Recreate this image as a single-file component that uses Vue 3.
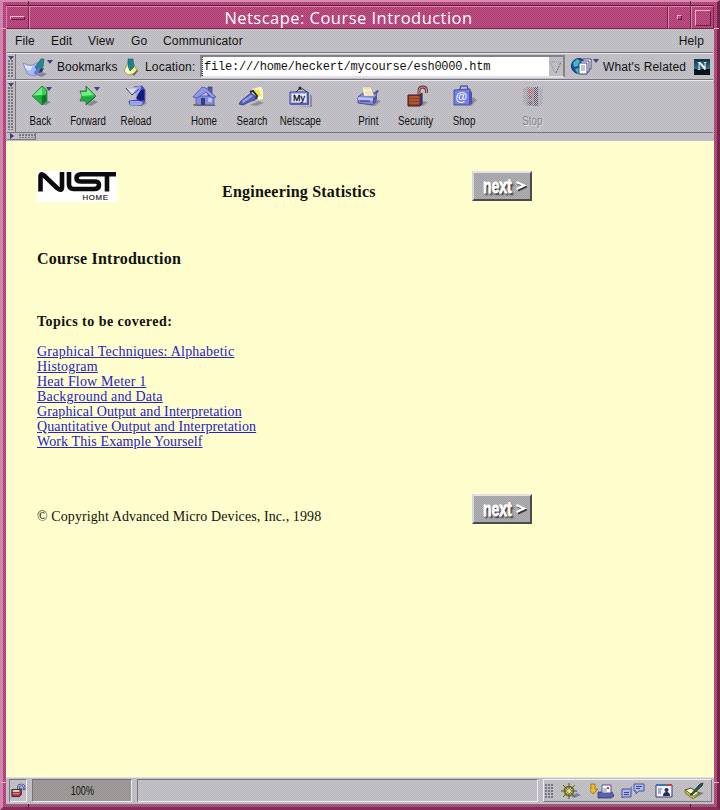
<script setup>
const menus = [
  { label: 'File', w: 36 },
  { label: 'Edit', w: 37 },
  { label: 'View', w: 43 },
  { label: 'Go', w: 32 },
  { label: 'Communicator', w: 90 },
]

const caret = '<path d="M30 4h6l-3 4z" fill="#404080"/>'

const art = {
  back: `<path d="M25 22l3-5 7 2-5 3z" fill="#8a8890"/><path d="M16 13L26 3l5 4v11l-5 4z" fill="#22b040" stroke="#1a5c30" stroke-width=".6"/><path d="M17 12.500L26 4v8z" fill="#6ff083"/><path d="M26 4l4 3v4l-4 1z" fill="#3fcf58"/><path d="M17 14l9-1v8z" fill="#1fae42"/><path d="M26 13l4.500-1v6L26 21z" fill="#087a28"/>${caret}`,
  forward: `<path d="M23 22l7-5 4 2-7 4z" fill="#8a8890"/><path d="M16 8h6V3l10 10-10 9v-4h-6l2-5z" fill="#2cba48" stroke="#1a5c30" stroke-width=".7"/><path d="M17 9h6V5l7 7-12 1z" fill="#6ff083"/><path d="M18 14h12l-7 6v-3h-6z" fill="#1caa40"/><path d="M23 21l8-7" stroke="#075e20"/>${caret}`,
  reload: `<path d="M24 22l7-4 4 2-5 3z" fill="#8a8890"/><path d="M22 4l8-1 3 4v11l-3 4H18l-1-4 8-1 2-3z" fill="#4a55bd" stroke="#2a327c" stroke-width=".7"/><path d="M22 4l7-1-1 6-4 5z" fill="#9aa5ee"/><path d="M28 8l3-2 1 2v9l-4 1-4-3z" fill="#101a80"/><path d="M18 18h9l4 1-1 3H18z" fill="#98a3f2"/><path d="M14 5l4 1 7-1-6 7z" fill="#d9dced"/><path d="M14 5l6 7 7-6" fill="none" stroke="#39406e"/>`,
  home: `<path d="M13 21l7 1 13-1 3 2H14z" fill="#368577"/><path d="M28 4h4v9h-4z" fill="#5359a4" stroke="#34396d" stroke-width=".7"/><path d="M16 13h18v9H16z" fill="#858ce0" stroke="#464c96" stroke-width=".7"/><path d="M13 14L22 4l4 1 10 9-4 1-6-6-9 6z" fill="#8f98ec" stroke="#4b519f" stroke-width=".8"/><path d="M21 15h4v7h-4z" fill="#353b85"/><path d="M28 15h4v4h-4z" fill="#b8c1ff"/><path d="M14 22h4m7 0h5" stroke="#bb5b36"/>`,
  search: `<path d="M22 22l9-4 5 2-8 3z" fill="#8f8d97"/><path d="M24 6l9-2 2 3v9l-4 1-7-7z" fill="#fff9c2"/><path d="M26 6l5 1 3 5-5 3-4-6z" fill="#f2e936"/><path d="M13 18l10-8 5 4-1 3-4 1-8 4-4-1z" fill="#5a62b8" stroke="#2d347a" stroke-width=".8"/><path d="M14 18l9-6 2 1-10 7z" fill="#98a2ea"/><path d="M22 9l3-1 4 5-1 3" fill="none" stroke="#20266a" stroke-width="2"/><path d="M30 4l1 2m2-2l-1 3m3 3h-3" stroke="#fff"/>`,
  netscape: `<path d="M20 23h14V11l2 2v11z" fill="#8f8d97"/><path d="M20 9l3-3h4l4 3" fill="none" stroke="#2c2e40"/><circle cx="24" cy="5" r="1.500" fill="#222"/><path d="M14 9h18v12H14z" fill="#aab4fb" stroke="#353c86"/><path d="M16 11h14v8H16z" fill="#ecedff"/><path d="M14 21h18M32 9v13" stroke="#4b52a8" stroke-width="1.700"/><text x="17" y="18" font-size="9" font-family="Liberation Sans" fill="#111" stroke="#111" stroke-width=".3">My</text>`,
  print: `<path d="M25 22l9-5 3 1-6 5z" fill="#8f8d97"/><path d="M14 14l5-4h13v9l-4 3-14-2z" fill="#7d87d9" stroke="#363e87" stroke-width=".8"/><path d="M18 4h9l3 9H20z" fill="#fff6ce" stroke="#999" stroke-width=".5"/><path d="M20 6h6m-5 3h6m-5 2h6" stroke="#c5bfa1" stroke-width=".7"/><path d="M14 14l15 1 3-5v4l-4 4-14-1z" fill="#b7c1ff"/><path d="M29 15v6l4-5v-5z" fill="#4c559e"/><path d="M30 10l3-3 2 1-3 4z" fill="#4d59a7"/><path d="M16 18h10" stroke="#30366c"/>`,
  security: `<path d="M29 18l7 1-5 4h-3z" fill="#8f8d97"/><path d="M27 12V8q0-4 4-4 3.500 0 3.500 4v2" fill="none" stroke="#5b2c3d" stroke-width="2.800"/><path d="M27 12V8q0-4 4-4 3.500 0 3.500 4v2" fill="none" stroke="#d08f78" stroke-width="1.200"/><path d="M16 12h12l2-2v11l-2 2H16z" fill="#8f3c20" stroke="#391b24"/><path d="M17 14h10m-10 3h10m-10 3h10" stroke="#d2703c"/><path d="M28 12l2-1v10l-2 2z" fill="#35307a"/>`,
  shop: `<path d="M27 22l6-8 4 3-6 6z" fill="#8f8d97"/><path d="M19 9l2-6h6l2 6" fill="none" stroke="#555cae" stroke-width="1.500"/><path d="M14 7l16-1 2 14-3 2H14z" fill="#7480e4" stroke="#343d98" stroke-width=".8"/><path d="M29 8l3 1v11l-3 2z" fill="#4b54ac"/><text x="15.500" y="18" font-size="12" font-weight="bold" font-family="Liberation Sans" fill="#f2f4ff">@</text>`,
  stop: `<path d="M15 6l4-2h12l4 2v4l-2 1 2 1v4l-2 1 2 1v2l-4 3H19l-4-3v-2l2-1-2-1v-4l2-1-2-1z" fill="#a09eae"/><path d="M19 4h7v19h-7z" fill="#8b8592"/><path d="M26 4h4v19h-4z" fill="#5a5766"/><circle cx="22.500" cy="8.500" r="2.800" fill="#d04a5c"/><circle cx="22.500" cy="14" r="2" fill="#8b5056"/><circle cx="22.500" cy="20" r="2" fill="#49545b"/><path d="M14 4.500h21M14 6.500h21M14 8.500h21M14 10.500h21M14 12.500h21M14 14.500h21M14 16.500h21M14 18.500h21M14 20.500h21M14 22.500h21" stroke="#c2c0c6" stroke-dasharray="1 1"/><path d="M15 5.500h20M15 7.500h20M15 9.500h20M15 11.500h20M15 13.500h20M15 15.500h20M15 17.500h20M15 19.500h20M15 21.500h20" stroke="#c2c0c6" stroke-dasharray="1 1"/>`,
}

const tools = [
  [{ id: 'back', label: 'Back' }, { id: 'forward', label: 'Forward' }, { id: 'reload', label: 'Reload' }],
  [{ id: 'home', label: 'Home' }, { id: 'search', label: 'Search' }, { id: 'netscape', label: 'Netscape' }],
  [{ id: 'print', label: 'Print' }, { id: 'security', label: 'Security' }, { id: 'shop', label: 'Shop' }],
  [{ id: 'stop', label: 'Stop', off: true }],
]

const topics = [
  { text: 'Graphical Techniques: Alphabetic', c: 'wide' },
  { text: 'Histogram' },
  { text: 'Heat Flow Meter 1' },
  { text: 'Background and Data' },
  { text: 'Graphical Output and Interpretation', c: 'tight' },
  { text: 'Quantitative Output and Interpretation', c: 'tight' },
  { text: 'Work This Example Yourself', c: 'tight' },
]

const components = [
  `<path d="M12 14l6-3 4 2-7 3z" fill="#777fb8"/><circle cx="10" cy="9" r="4.500" fill="none" stroke="#77751d" stroke-width="2"/><path d="M10 1v16M2 9h16M4 3l12 12M16 3L4 15" stroke="#5f5d19"/><circle cx="10" cy="9" r="2" fill="#e3df7a"/>`,
  `<path d="M1 2h4v5h3l-5 5-4-5h2z" fill="#f5bd18" stroke="#866112" stroke-width=".7"/><path d="M8 10h14l2 4-3 2H8z" fill="#5962ae" stroke="#252d6a" stroke-width=".7"/><path d="M12 3h9v8h-9z" fill="#fff" stroke="#4b528f"/><path d="M17 5h2v2h-2z" fill="#c23b4b"/><path d="M13 7h4m-4 2h4" stroke="#888"/>`,
  `<path d="M13 2h10v7h-5l-3 3V9h-2z" fill="#aeb9fa" stroke="#4b5494"/><path d="M1 7h9v8H2l-1 1z" fill="#aab5f4" stroke="#4b5494"/><path d="M9 6l2-2v8l-1 2" fill="#7680c0"/><path d="M15 4.500h6m-6 2h4M3 10.500h5m-5 2h5" stroke="#414979"/>`,
  `<path d="M4 3h16v12H4z" fill="#f1f1ff" stroke="#333b77"/><path d="M4 3h7" stroke="#426ec7" stroke-width="2"/><path d="M11 3h4" stroke="#248c78" stroke-width="2"/><path d="M15 3h5" stroke="#d73547" stroke-width="2"/><path d="M6 7h4m-4 2h3m-3 2h3" stroke="#656a98"/><circle cx="14.500" cy="8" r="2" fill="#252c59"/><path d="M11 14q0-4 3.500-4t3.500 4z" fill="#252c59"/>`,
  `<path d="M8 15l9-5 4 1-9 5z" fill="#827f69"/><path d="M2 8l6-2 8 5-5 4z" fill="#fffbd0" stroke="#4f5031"/><path d="M2 8v3l8 6 6-5v-2l-5 4z" fill="#bdbe3d" stroke="#4c4b23" stroke-width=".6"/><path d="M7 13L17 2l3-1-1 3L9 13z" fill="#225f4e" stroke="#111c20" stroke-width=".7"/>`,
]
</script>

<template>
  <div class="window">
    <i class="notch tl"></i><i class="notch tr"></i><i class="notch bl"></i><i class="notch br"></i>
    <i class="notch lt"></i><i class="notch rt"></i><i class="notch lb"></i><i class="notch rb"></i>
    <header class="titlebar">
      <div class="tbtn sys"><span></span></div>
      <div class="title"><span>Netscape: Course Introduction</span></div>
      <div class="tbtn min"><span></span></div>
      <div class="tbtn max"><span></span></div>
    </header>

    <div class="chrome">
      <nav class="menubar">
        <span v-for="m in menus" :key="m.label" :style="{ width: m.w + 'px' }">{{ m.label }}</span>
        <span class="help">Help</span>
      </nav>

      <div class="locbar">
        <div class="grip"><i></i></div>
        <svg class="book" width="34" height="24" viewBox="0 0 34 24">
          <path d="M14 20l6-3 5 2-5 3z" fill="#8a8890" />
          <path d="M1 8l5 2 5 0 5-3 1 11-5 3-7-2-2-6z" fill="#a9b4fa" stroke="#6b74bd" stroke-width=".6" />
          <path d="M2 9l4 2 5 0-3 5-4-2z" fill="#dfe4ff" />
          <path d="M13 12l6-8h3l-1 8-5 5z" fill="#23888c" stroke="#235a66" stroke-width=".6" />
          <path d="M12 17l5-4 3 0-3 5-4 2z" fill="#6a74cc" /><path d="M18 14l4-1-2 4-3 1z" fill="#243370" />
          <path d="M25 5h6l-3 4z" fill="#404080" />
        </svg>
        <span class="t bookmarks">Bookmarks</span>
        <svg class="quick" width="18" height="20" viewBox="0 0 18 20">
          <path d="M10 17l5-5 1 2-4 5z" fill="#666672" />
          <path d="M2 14l4-9 5 1 4 7-4 4-5 1z" fill="#f2f08a" stroke="#8b8950" stroke-width=".7" />
          <path d="M3 13l4-5 1 8-3 1z" fill="#fffdd6" />
          <path d="M6 2h5l1 8-4 4-2-5z" fill="#14868a" stroke="#23595f" stroke-width=".6" />
        </svg>
        <span class="t location">Location:</span>
        <div class="field">
          <div class="url">file:///home/heckert/mycourse/esh0000.htm</div>
          <svg width="14" height="20" viewBox="0 0 14 20"><path d="M1 5h11" stroke="#999" stroke-dasharray="1 1" /><path d="M1 5l5 11" stroke="#a5a3aa" /><path d="M7 16l5-11" stroke="#666" stroke-dasharray="2 1" /></svg>
        </div>
        <svg class="related" width="30" height="22" viewBox="0 0 30 22">
          <circle cx="8" cy="9" r="7.500" fill="#1e4ca4" stroke="#17306f" />
          <path d="M2 6l4-4 3 2-2 5-4 1zM4 12l4-1 2 4-3 2z" fill="#3ac0bc" />
          <path d="M12 2h8v10h-8z" fill="#fff" stroke="#414776" /><path d="M10 4h8v11h-8z" fill="#fff" stroke="#414776" /><path d="M8 6h8v11H8z" fill="#fff" stroke="#414776" />
          <path d="M10 9h4m-4 2h4m-4 2h4" stroke="#858aba" />
          <path d="M22 2h6l-3 4z" fill="#404080" />
        </svg>
        <span class="t whats">What's Related</span>
        <div class="nlogo"><span>N</span></div>
      </div>

      <div class="toolbar">
        <div class="grip"><i></i></div>
        <div v-for="(g, i) in tools" :key="i" class="group">
          <div v-for="t in g" :key="t.id" class="tool" :class="{ off: t.off }">
            <svg width="48" height="26" viewBox="0 0 48 26" v-html="art[t.id]"></svg>
            <span class="lbl">{{ t.label }}</span>
          </div>
        </div>
      </div>
      <div class="tabrow">
        <div class="tab"><b></b><i></i></div>
      </div>
    </div>

    <main class="page">
      <div class="head">
        <svg class="nist" width="80" height="31" viewBox="0 0 80 31">
          <rect width="80" height="31" fill="#fff" />
          <g fill="none" stroke="#0c0c0c" stroke-width="4.600">
            <path d="M3.500 20.500V6q0-4.500 3.500-1.500L20 17q5 4 5-1V1" />
            <path d="M32 1v12q0 5 4.500 5H57q5 0 5-4t-5-3.500H44q-4.500 0-4.500-3.500t4.500-3.700h35" />
            <path d="M70 3v17.500" />
          </g>
          <text x="45.500" y="29.300" font-family="Liberation Sans" font-size="7.800" textLength="25.500" fill="#111" stroke="#111" stroke-width=".15">HOME</text>
        </svg>
        <h1>Engineering Statistics</h1>
        <div class="next"><span>next</span><svg width="12" height="14" viewBox="0 0 12 14"><path d="M3 4.500L10.500 8 3 11.500" fill="none" stroke="#3a3a3c" stroke-width="2.200" /><path d="M1.500 3L9 6.500 1.500 10" fill="none" stroke="#fff" stroke-width="2.200" /></svg></div>
      </div>
      <h2>Course Introduction</h2>
      <h3>Topics to be covered:</h3>
      <ul>
        <li v-for="t in topics" :key="t.text"><a :class="t.c">{{ t.text }}</a></li>
      </ul>
      <div class="foot">
        <p>© Copyright Advanced Micro Devices, Inc., 1998</p>
        <div class="next"><span>next</span><svg width="12" height="14" viewBox="0 0 12 14"><path d="M3 4.500L10.500 8 3 11.500" fill="none" stroke="#3a3a3c" stroke-width="2.200" /><path d="M1.500 3L9 6.500 1.500 10" fill="none" stroke="#fff" stroke-width="2.200" /></svg></div>
      </div>
    </main>

    <footer class="status">
      <div class="cell lock">
        <svg width="17" height="17" viewBox="0 0 17 17">
          <path d="M9 8V5q0-2.500 3-2.500T15 5v3" fill="none" stroke="#2d3468" stroke-width="2.600" />
          <path d="M9 8V5q0-2.500 3-2.500T15 5v2.500" fill="none" stroke="#a7b0ee" stroke-width="1.200" />
          <path d="M2 7.500h8l2-1v6.500l-2 2H2z" fill="#a33242" stroke="#2b2544" /><path d="M3 9h7" stroke="#fff" stroke-width="1.500" /><path d="M3 12h7" stroke="#d9bd42" />
        </svg>
      </div>
      <div class="cell progress"><span>100%</span></div>
      <div class="cell message"></div>
      <div class="comps">
        <i class="dots"></i>
        <svg v-for="(c, i) in components" :key="i" width="25" height="18" viewBox="0 0 25 18" v-html="c"></svg>
      </div>
    </footer>
  </div>
</template>

<style>
body { margin: 0; overflow: hidden; }
</style>

<style scoped>
* { box-sizing: border-box; }
.window {
  position: relative;
  width: 720px;
  height: 810px;
  display: flex;
  flex-direction: column;
  padding: 3px 3px 2px 3px;
  border: solid;
  border-width: 2px 3px 3px 3px;
  border-color: #d58caf #702747 #842d56 #cd86ad;
  background: repeating-conic-gradient(#a93a6b 0 25%, #c0538a 0 50%) 0 0 / 2px 2px;
  font-family: "Liberation Sans", Arial, sans-serif;
  font-size: 12px;
  color: #111;
}
.notch { position: absolute; background: #e9a9c8; }
.tl, .tr { top: -1px; width: 1px; height: 5px; background: #5f1e3d; }
.bl, .br { bottom: -2px; width: 1px; height: 5px; background: #5f1e3d; }
.tl, .bl { left: 25px; }
.tr, .br { right: 26px; }
.lt, .rt, .lb, .rb { width: 5px; height: 1px; }
.lt, .lb { left: -2px; }
.rt, .rb { right: -2px; }
.lt, .rt { top: 26px; }
.lb, .rb { bottom: 24px; }

.titlebar {
  flex: none;
  height: 24px;
  display: flex;
  border-top: 1px solid #5e1c3c;
  color: #fff;
}
.title {
  flex: 1;
  display: flex;
  align-items: center;
  justify-content: center;
  border: solid;
  border-width: 1px;
  border-color: #d886ae #742648 #742648 #d886ae;
  font-family: "Open Sans", "Noto Sans", sans-serif;
  font-size: 16.500px;
  line-height: 20px;
  white-space: nowrap;
}
.title span { letter-spacing: .47px; }
.tbtn {
  width: 23px;
  display: flex;
  align-items: center;
  justify-content: center;
  border: solid;
  border-width: 1px;
  border-color: #d886ae #742648 #742648 #d886ae;
}
.tbtn span { border: 1px solid; border-color: #eeb3cf #64203f #64203f #eeb3cf; }
.sys span { width: 15px; height: 4px; }
.min span { width: 5px; height: 5px; }
.max span { width: 16px; height: 16px; }

.chrome, .status {
  background: repeating-conic-gradient(#b9b7bf 0 25%, #c6c4c6 0 50%) 0 0 / 2px 2px;
}
.chrome { flex: none; height: 112px; padding: 0 1px; }
.menubar {
  display: flex;
  height: 24px;
  padding: 0 9px 0 8px;
  line-height: 25px;
  letter-spacing: .15px;
  border-bottom: 1px solid #77747c;
}
.help { margin-left: auto; }

.locbar {
  display: flex;
  align-items: center;
  height: 27px;
  border-top: 1px solid #ebe9ee;
  border-bottom: 1px solid #77747c;
}
.grip {
  align-self: stretch;
  width: 9px;
  flex: none;
  padding: 2px 1px;
  display: flex;
  flex-direction: column;
  border-right: 1px solid #77747c;
}
.grip::before {
  content: "";
  width: 0;
  border: 3px solid transparent;
  border-top: 4px solid #45457c;
  border-bottom: 0;
}
.grip i {
  flex: 1;
  width: 6px;
  background: radial-gradient(circle at 1px 1px, #6f6d7c .7px, #eceaf3 .8px 1.3px, transparent 1.4px) 0 0 / 3px 3px;
}
.t { white-space: nowrap; flex: none; }
.book { margin-left: 6px; flex: none; }
.bookmarks { margin-left: 1px; width: 65px; letter-spacing: .05px; }
.quick { flex: none; width: 18px; }
.location { margin-left: 5px; width: 55px; letter-spacing: .2px; }
.field {
  display: flex;
  width: 365px;
  height: 23px;
  flex: none;
  border: 2px solid;
  border-color: #85828b #85828b #e2e0e6 #85828b;
}
.url {
  width: 348px;
  background: #fff;
  padding-left: 1px;
  font-family: "Liberation Mono", monospace;
  font-size: 12px;
  letter-spacing: -.22px;
  line-height: 20px;
  border-left: 1px dotted #333;
}
.related { margin: 2px 0 0 6px; flex: none; }
.whats { margin-left: 2px; width: 91px; letter-spacing: .15px; }
.nlogo {
  width: 16px;
  height: 16px;
  background: linear-gradient(#12303f, #2b7787 60%, #07121b 65%);
  color: #fff;
  font: bold 13px/14px "Liberation Serif", serif;
  text-align: center;
}

.toolbar {
  display: flex;
  height: 53px;
  border-top: 1px solid #ebe9ee;
  border-bottom: 1px solid #77747c;
}
.group { display: flex; margin-right: 20px; }
.tool { width: 48px; display: flex; flex-direction: column; align-items: center; padding-top: 2px; }
.tool svg { flex: none; }
.lbl { line-height: 14px; margin-top: 5px; transform: scaleX(.81); white-space: nowrap; }
.off .lbl { color: #85828b; text-shadow: 1px 1px #e5e3e9; }
.tabrow { height: 8px; }
.tab {
  display: flex;
  align-items: center;
  width: 29px;
  height: 7px;
  padding-left: 3px;
  gap: 5px;
  border: solid;
  border-width: 0 1px 1px 0;
  border-color: #77747c;
}
.tab b { border: 3px solid transparent; border-left: 4px solid #3a3a78; border-right: 0; }
.tab i { width: 16px; height: 4px; background: radial-gradient(circle at 1px 1px, #6f6d7c .7px, #f5f3fa .8px 1.3px, transparent 1.4px) 0 0 / 3px 3px; }

.page {
  flex: 1;
  min-height: 0;
  padding: 30px 30px 0 31px;
  background: repeating-conic-gradient(#fffec8 0 25%, #fefed2 0 50%) 0 0 / 2px 2px;
  font-family: "Liberation Serif", "Times New Roman", serif;
  font-size: 14px;
}
.head, .foot { display: flex; height: 31px; }
.nist { flex: none; }
h1, h2, h3, p, ul { margin: 0; padding: 0; white-space: nowrap; }
h1 { width: 250px; margin-left: 105px; font-size: 16px; line-height: 18px; padding-top: 12px; letter-spacing: .22px; }
h2 { font-size: 16px; line-height: 18px; margin-top: 48px; letter-spacing: .23px; }
h3 { font-size: 14px; line-height: 16px; margin-top: 46px; letter-spacing: .46px; }
ul { list-style: none; margin-top: 14px; }
li { height: 15px; line-height: 15px; }
a { color: #2522c8; text-decoration: underline; letter-spacing: .19px; }
a.wide { letter-spacing: .23px; }
a.tight { letter-spacing: .11px; }
.foot { margin-top: 45px; height: 30px; }
.foot p { width: 435px; padding-top: 15px; line-height: 16px; letter-spacing: .09px; }
.next {
  width: 60px;
  height: 30px;
  display: flex;
  align-items: center;
  padding-left: 9px;
  border: 2px solid;
  border-color: #e4e2e4 #4c4a4c #4c4a4c #d8d6d8;
  background: repeating-conic-gradient(#9d9da3 0 25%, #b3b3b6 0 50%) 0 0 / 2px 2px;
  color: #fff;
}
.next span {
  width: 32px;
  font: bold 20px/20px "Liberation Sans", sans-serif;
  transform: scaleX(.7);
  transform-origin: left;
  text-shadow: 2px 2px 2px #222;
  -webkit-text-stroke: .8px #fff;
}

.status {
  flex: none;
  height: 28px;
  display: flex;
  align-items: center;
  padding: 1px 2px 2px 3px;
  gap: 5px;
  border-top: 1px solid #e3e1e6;
  border-bottom: 1px solid #77747c;
}
.cell { height: 23px; border: 1px solid; border-color: #77747c #edebf0 #edebf0 #77747c; display: flex; align-items: center; justify-content: center; }
.lock { width: 18px; }
.progress { width: 100px; background: repeating-conic-gradient(#96938f 0 25%, #a39c9e 0 50%) 0 0 / 2px 2px; }
.progress span { transform: scaleX(.76); }
.message { width: 401px; }
.comps { display: flex; flex: 1; height: 23px; align-items: center; gap: 6px; border: 1px solid; border-color: #edebf0 #77747c #77747c #edebf0; }
.dots { width: 8px; height: 14px; margin-left: 1px; background: radial-gradient(circle at 1px 1px, #6f6d7c .7px, #f5f3fa .8px 1.3px, transparent 1.4px) 0 0 / 3px 3px; }
</style>
